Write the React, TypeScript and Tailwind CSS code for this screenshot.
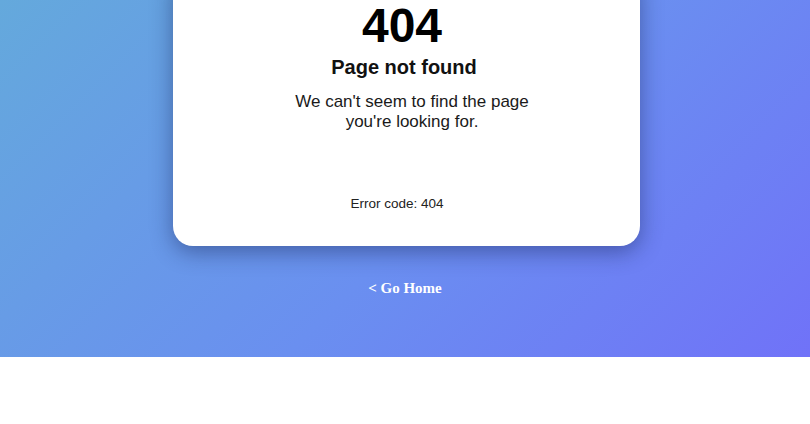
const NotFoundCard = () => {
  return (
    <div className="ml-[3px] mt-[-30px] flex w-[467px] flex-col items-center rounded-[20px] bg-white pb-[34px] pt-[32px] text-center shadow-[0_6px_22px_rgba(20,30,80,0.45)]">
      <h1 className="mr-[9px] text-[48px] font-bold leading-none text-black">404</h1>
      <h2 className="mr-[5px] mt-[6px] text-[20px] font-bold leading-[23px] text-[#111]">
        Page not found
      </h2>
      <p className="ml-[11px] mt-[13px] max-w-[240px] text-[17px] leading-[19.5px] text-[#1a1a1a]">
        We can't seem to find the page you're looking for.
      </p>
      <span className="mr-[19px] mt-[65px] text-[13.5px] leading-[15.5px] text-[#222]">
        Error code: 404
      </span>
    </div>
  );
};

const App = () => {
  return (
    <div className="font-['Liberation_Sans',Arial,sans-serif]">
      <section className="flex h-[357px] flex-col items-center overflow-hidden bg-[linear-gradient(135deg,#64a9dc_0%,#6a8ff0_55%,#7072f8_100%)]">
        <NotFoundCard />
        <a
          href="#"
          className="mt-[34px] font-['Liberation_Serif',serif] text-[15px] font-bold leading-[17.25px] text-white"
        >
          &lt; Go Home
        </a>
      </section>
    </div>
  );
};

export default App;
